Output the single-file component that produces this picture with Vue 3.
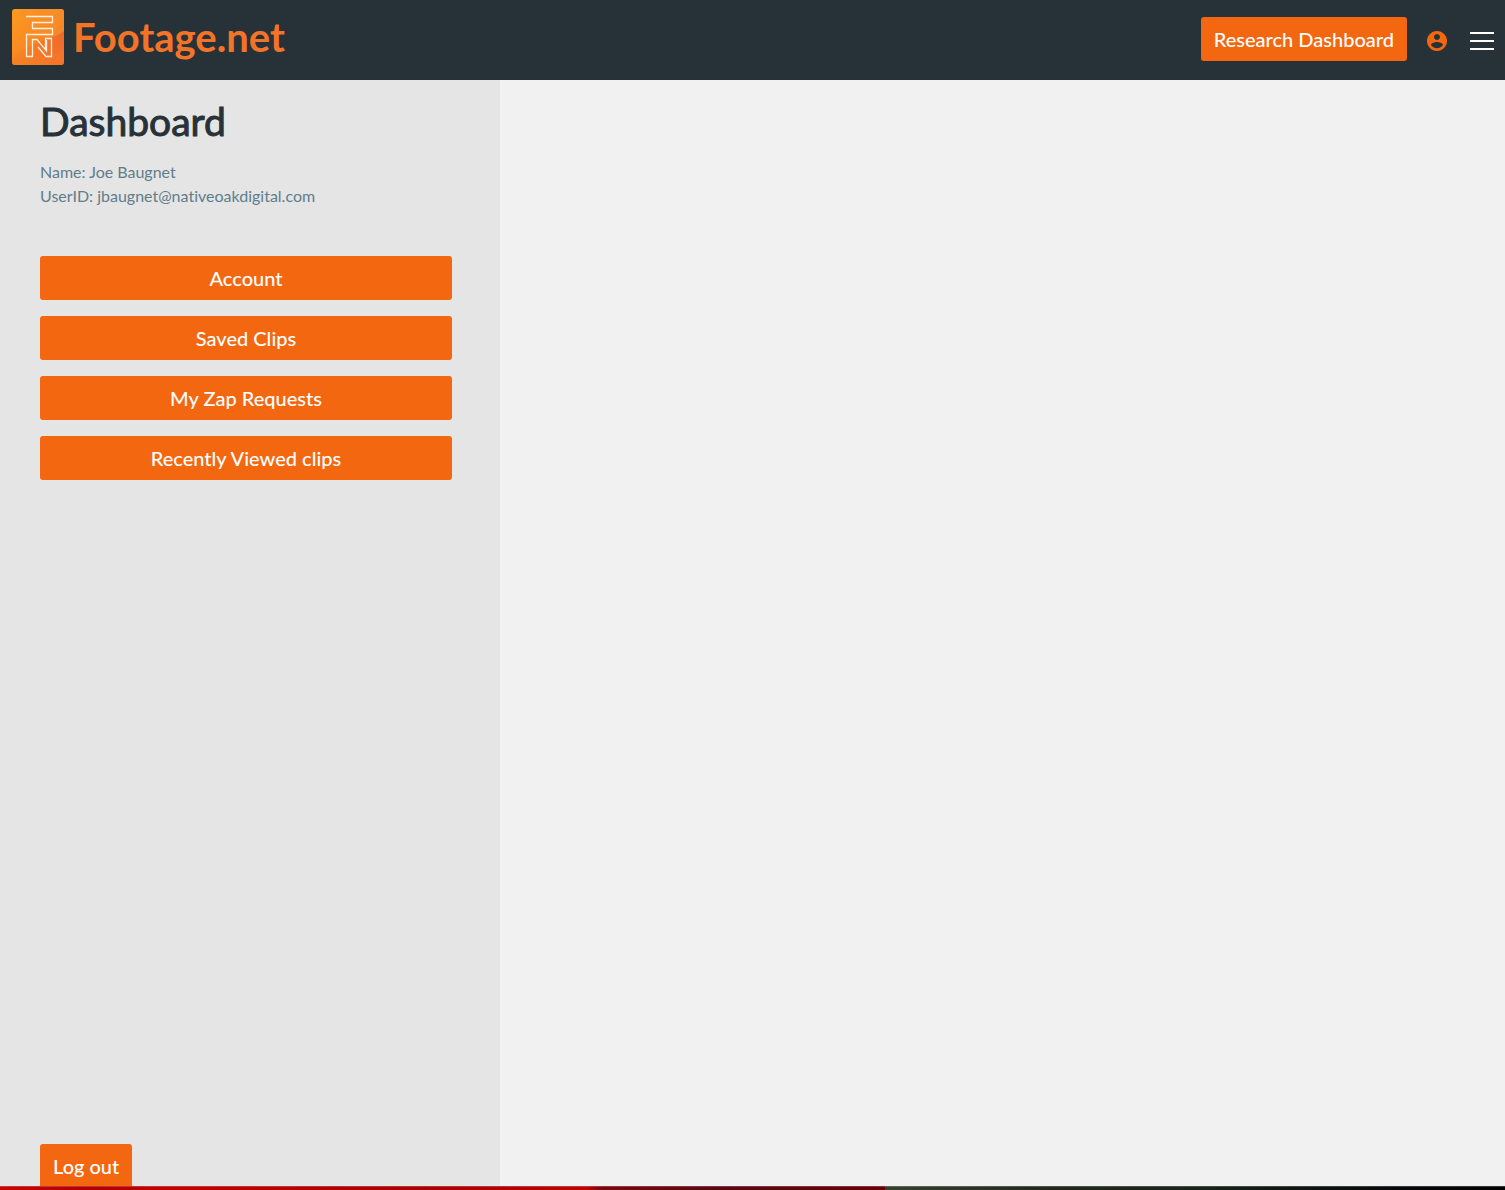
<script setup>
const links = ['Account', 'Saved Clips', 'My Zap Requests', 'Recently Viewed clips']
</script>

<template>
  <div class="page">
    <header class="topbar">
      <a class="brand" href="#">
        <svg class="logo" viewBox="0 0 52 56" aria-hidden="true">
          <defs>
            <linearGradient id="tile" x1="0" y1="0" x2="1" y2="1">
              <stop offset="0" stop-color="#fb9b20" />
              <stop offset="0.5" stop-color="#f88822" />
              <stop offset="1" stop-color="#f06d2c" />
            </linearGradient>
            <linearGradient id="sweep" x1="0" y1="1" x2="1" y2="0">
              <stop offset="0" stop-color="#f67a27" stop-opacity="0.2" />
              <stop offset="1" stop-color="#ee622e" stop-opacity="0.8" />
            </linearGradient>
            <clipPath id="tile-shape"><rect width="52" height="56" rx="3" /></clipPath>
          </defs>
          <g clip-path="url(#tile-shape)">
            <rect width="52" height="56" fill="url(#tile)" />
            <path d="M7 0C12 16 24 27 38 28C44 27 49 25 52 22V0Z" fill="#f7902a" opacity="0.6" />
            <path d="M52 22C39 32 22 31 0 49V56H52Z" fill="url(#sweep)" />
            <path d="M0 51C18 46 38 50 52 40V56H0Z" fill="#f57b27" opacity="0.5" />
          </g>
          <path d="M14 7.500H40.500V13.500H20.500V19.500H40.500V25.500H14.500V47.500H20.500V30.500H25L34.500 42V31M26 38L34 47.500H39.500V29.500H33.500V40" fill="none" stroke="#fff0df" stroke-width="1.300" />
        </svg>
        <span class="wordmark">Footage.net</span>
      </a>
      <nav class="actions" aria-label="Main">
        <button class="btn" type="button">Research Dashboard</button>
        <button class="icon-btn user" type="button" aria-label="Account">
          <svg width="24" height="24" viewBox="0 0 24 24" fill="#f46711" aria-hidden="true">
            <path d="M12 2C6.480 2 2 6.480 2 12s4.480 10 10 10 10-4.480 10-10S17.520 2 12 2zm0 3c1.660 0 3 1.340 3 3s-1.340 3-3 3-3-1.340-3-3 1.340-3 3-3zm0 14.200c-2.500 0-4.710-1.280-6-3.220.03-1.990 4-3.080 6-3.080 1.990 0 5.970 1.090 6 3.080-1.290 1.940-3.500 3.220-6 3.220z" />
          </svg>
        </button>
        <button class="icon-btn menu" type="button" aria-label="Menu">
          <span></span><span></span><span></span>
        </button>
      </nav>
    </header>

    <div class="body">
      <aside class="sidebar">
        <h1>Dashboard</h1>
        <p class="details">Name: Joe Baugnet<br />UserID: jbaugnet@nativeoakdigital.com</p>
        <div class="links">
          <button v-for="link in links" :key="link" class="btn" type="button">{{ link }}</button>
        </div>
        <button class="btn logout" type="button">Log out</button>
      </aside>
      <main class="content"></main>
    </div>
    <div class="backdrop"></div>
  </div>
</template>

<style>
body {
  margin: 0;
}
</style>

<style scoped>
.page {
  display: flex;
  flex-direction: column;
  height: 100vh;
  font-family: Lato, sans-serif;
  font-variant-ligatures: none;
  background: #f1f1f1;
}
.topbar {
  display: flex;
  flex: none;
  justify-content: space-between;
  align-items: flex-start;
  box-sizing: border-box;
  height: 80px;
  padding: 9px 11px 0 12px;
  background: #273238;
}
.brand {
  display: flex;
  gap: 9px;
  color: #f37428;
  text-decoration: none;
}
.logo {
  width: 52px;
  height: 56px;
}
.wordmark {
  font-size: 40px;
  font-weight: 700;
  line-height: 56px;
}
.actions {
  display: flex;
  align-items: center;
  padding-top: 8px;
}
.btn {
  flex: none;
  height: 44px;
  padding: 0 13px;
  border: 0;
  border-radius: 3px;
  background: #f46711;
  color: #fff;
  font: 500 20px/30px Lato, sans-serif;
  cursor: pointer;
}
.icon-btn {
  display: flex;
  padding: 0;
  border: 0;
  background: none;
  cursor: pointer;
}
.user {
  margin: 4px 21px 0 18px;
}
.menu {
  flex-direction: column;
  gap: 6px;
  width: 24px;
  padding-top: 4px;
}
.menu span {
  height: 2px;
  background: #fff;
}
.body {
  display: flex;
  flex: 1;
  min-height: 0;
}
.sidebar {
  display: flex;
  flex-direction: column;
  flex: none;
  box-sizing: border-box;
  width: 500px;
  padding: 16px 48px 0 40px;
  overflow: hidden;
  background: #e5e5e5;
}
h1 {
  margin: 0;
  color: #273238;
  font-size: 39px;
  font-weight: 400;
  line-height: 50px;
  -webkit-text-stroke: 1px #273238;
}
.details {
  margin: 14px 0 48px;
  color: #607d8b;
  font-size: 16px;
  line-height: 24px;
}
.links {
  display: flex;
  flex-direction: column;
  gap: 16px;
}
.logout {
  align-self: flex-start;
  margin: auto 0 -2px;
}
.content {
  flex: 1;
}
.backdrop {
  flex: none;
  box-sizing: border-box;
  height: 4px;
  border-top: 1px solid #ffffff33;
  background: linear-gradient(90deg, #c50505 0%, #b00000 6%, #c00000 11%, #a50000 28%, #b80505 39%, #7a0710 40%, #570910 48%, #680008 58.8%, #35412f 58.8%, #23281a 70%, #17231b 80%, #060608 94%, #030304 100%);
}
</style>
